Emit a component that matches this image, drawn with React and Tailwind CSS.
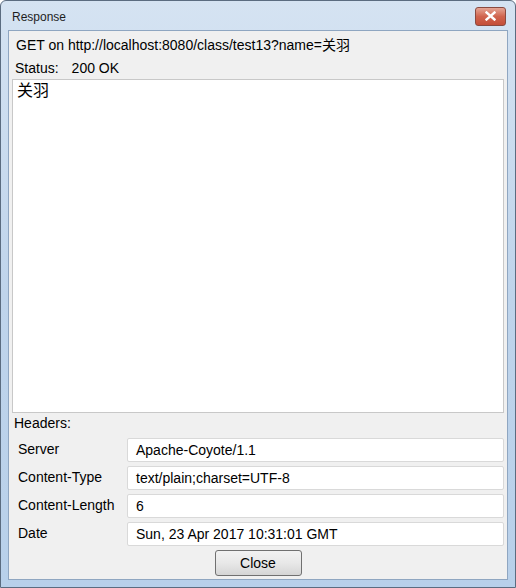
import React from 'react';

const headers = [
  ['Server', 'Apache-Coyote/1.1'],
  ['Content-Type', 'text/plain;charset=UTF-8'],
  ['Content-Length', '6'],
  ['Date', 'Sun, 23 Apr 2017 10:31:01 GMT'],
];

const font = { fontFamily: '"Liberation Sans", Arial, "Noto Sans CJK SC", sans-serif' };

export default function App() {
  return (
    <div
      className="w-[516px] h-[588px] flex flex-col border border-[#5b6c80] rounded-t-[6px] bg-gradient-to-b from-[#d5e3f2] via-[#bfd4eb] to-[#b8d0ea] text-[14px] text-[#000]"
      style={font}
    >
      {/* title bar */}
      <div className="h-[29px] flex items-center justify-between pl-[11px] pr-[9px]">
        <span className="text-[12px] text-[#1e1e1e] pt-[2px]">Response</span>
        <button className="w-[31px] h-[19px] mt-[1px] rounded-[3px] border border-[#8a4a40] bg-gradient-to-b from-[#e5a595] via-[#d0644e] to-[#c44e38] flex items-center justify-center">
          <svg width="11" height="10" viewBox="0 0 11 10">
            <path d="M1.5 1.5 L9.5 8.5 M9.5 1.5 L1.5 8.5" stroke="#fff" strokeWidth="2.4" strokeLinecap="square" />
          </svg>
        </button>
      </div>

      {/* client area */}
      <div className="flex-1 mx-[7px] mb-[7px] border border-[#8fa6c1] bg-[#f0f0f0] flex flex-col px-[3px]">
        <div className="h-[26px] flex items-end pl-[4px] pb-[1px]">GET on http://localhost:8080/class/test13?name=关羽</div>
        <div className="h-[22px] flex items-center pl-[3px] gap-[13px]">
          <span>Status:</span>
          <span>200 OK</span>
        </div>
        <div className="h-[334px] bg-white border border-[#c8c8c8] px-[4px] pt-[1px] text-[16px] leading-[20px]">
          关羽
        </div>
        <div className="h-[22px] flex items-end pl-[2px] pb-[1px]">Headers:</div>
        <div className="flex flex-col gap-[4px] pt-[3px]">
          {headers.map(([k, v]) => (
            <div key={k} className="flex items-center h-[24px]">
              <span className="w-[115px] pl-[6px] pb-[2px]">{k}</span>
              <div className="flex-1 h-[24px] bg-white border border-[#d9d9d9] rounded-[2px] flex items-center pl-[8px]">{v}</div>
            </div>
          ))}
        </div>
        <div className="flex justify-center pt-[4px]">
          <button className="w-[87px] h-[26px] rounded-[3px] border border-[#707070] bg-gradient-to-b from-[#f2f2f2] via-[#e8e8e8] to-[#d5d5d5] text-[14px]">
            Close
          </button>
        </div>
      </div>
    </div>
  );
}
